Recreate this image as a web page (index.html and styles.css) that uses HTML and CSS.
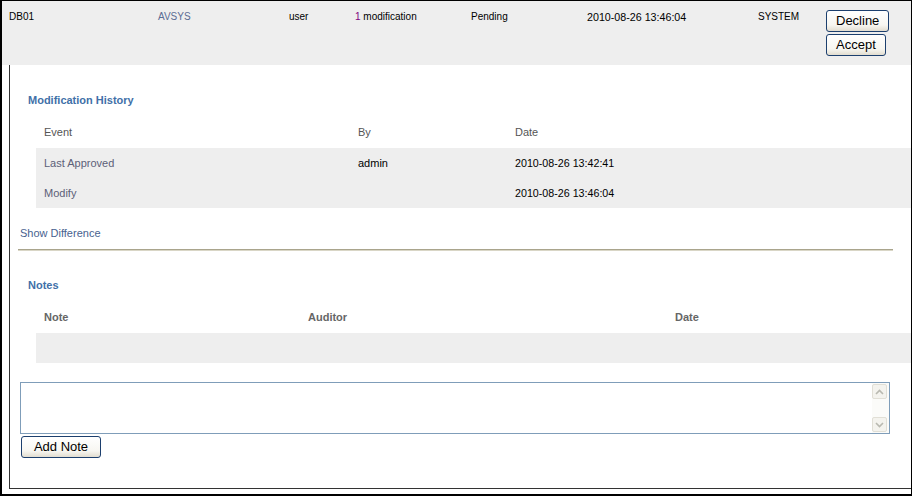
FILE: index.html
```html
<!DOCTYPE html>
<html lang="en">
<head>
    <meta charset="UTF-8">
    <title>Pending modification - DB01</title>
    <link rel="stylesheet" href="styles.css">
</head>
<body>
<div class="frame">
    <!--summary row-->
    <div class="summary">
        <span>DB01</span>
        <span class="sys">AVSYS</span>
        <span>user</span>
        <span><em class="count">1</em> modification</span>
        <span>Pending</span>
        <span class="dt">2010-08-26 13:46:04</span>
        <span>SYSTEM</span>
        <div class="actions">
            <button class="btn">Decline</button>
            <button class="btn">Accept</button>
        </div>
    </div>
    <!--detail-->
    <div class="detail">
        <h2 class="sec_title">Modification History</h2>
        <table class="grid history">
            <tr class="head"><th class="c1">Event</th><th class="c2">By</th><th>Date</th></tr>
            <tr><td class="evt">Last Approved</td><td>admin</td><td class="dt">2010-08-26 13:42:41</td></tr>
            <tr><td class="evt">Modify</td><td></td><td class="dt">2010-08-26 13:46:04</td></tr>
        </table>
        <a class="diff_link" href="javascript:void(0);">Show Difference</a>
        <hr class="rule">
        <h2 class="sec_title notes_title">Notes</h2>
        <table class="grid notes">
            <tr class="head bold"><th class="c1">Note</th><th class="c2">Auditor</th><th>Date</th></tr>
            <tr><td>&nbsp;</td><td></td><td></td></tr>
        </table>
        <div class="note_box">
            <textarea class="note_input"></textarea>
            <div class="vscroll">
                <span class="arrow"><svg width="9" height="6" viewBox="0 0 9 6"><path d="M1 5 L4.5 1.5 L8 5" fill="none" stroke="#b9b9b0" stroke-width="1.6"/></svg></span>
                <span class="arrow"><svg width="9" height="6" viewBox="0 0 9 6"><path d="M1 1 L4.5 4.5 L8 1" fill="none" stroke="#b9b9b0" stroke-width="1.6"/></svg></span>
            </div>
        </div>
        <button class="btn add_btn">Add Note</button>
    </div>
</div>
</body>
</html>
```

FILE: styles.css
```css
/*reset*/
html,body,div,h2,table,tr,th,td,hr,p{margin:0;padding:0;}
body{background:#fff;font:normal 11px "Liberation Sans",Arial,sans-serif;color:#000;}
table{border-collapse:collapse;border-spacing:0;}
em{font-style:normal;}

/*frame*/
.frame{width:912px;height:496px;box-sizing:border-box;border-style:solid;border-color:#000;border-width:1px 1px 2px 2px;display:flex;flex-direction:column;}

/*summary row*/
.summary{height:64px;box-sizing:border-box;background:#eee;padding:9px 0 0 7px;display:grid;grid-template-columns:149px 131px 66px 116px 116px 171px 68px auto;align-items:start;font-size:10px;line-height:12px;}
.summary span{padding-top:1px;}
.summary .sys{color:#5b6b93;}
.summary .count{color:#800080;}
.summary .dt{font-size:10.7px;}
.actions{display:flex;flex-direction:column;align-items:flex-start;gap:2px;}

.btn{font:13px "Liberation Sans",Arial,sans-serif;color:#000;height:22px;padding:0 9px;border:1px solid #1c3f6e;border-radius:3px;background:linear-gradient(to bottom,#fff 0%,#f7f6f1 70%,#e2ddd0 100%);cursor:pointer;line-height:18px;}

/*detail*/
.detail{flex:1;margin:0 0 5px 7px;border-left:1px solid #333;border-bottom:1px solid #333;display:flex;flex-direction:column;align-items:flex-start;}
.sec_title{font-size:11px;font-weight:bold;line-height:14px;color:#4170a8;margin:28px 0 0 18px;}
.notes_title{margin-top:27px;}

.grid{margin:11px 0 0 26px;width:calc(100% - 26px);font-size:11px;}
.grid th,.grid td{height:30px;padding:0 0 0 8px;text-align:left;vertical-align:middle;box-sizing:border-box;}
.grid .head th{font-weight:normal;color:#555;padding-bottom:3px;}
.grid .head.bold th{font-weight:bold;color:#666;}
.grid tr + tr td{background:#eee;}
.grid .evt{color:#5c6078;}
.grid .dt{font-size:10.7px;}
.history .c1{width:314px;}
.history .c2{width:157px;}
.notes .c1{width:264px;}
.notes .c2{width:367px;}

.diff_link{display:block;margin:18px 0 0 10px;line-height:14px;color:#48628f;text-decoration:none;}
.rule{align-self:stretch;margin:9px 18px 0 8px;height:0;border:0;border-top:1px solid #a9a48c;border-bottom:1px solid #d9d6c6;}

/*note input*/
.note_box{margin:19px 0 0 10px;width:870px;height:52px;box-sizing:border-box;border:1px solid #7f9db9;display:flex;background:#fff;}
.note_input{flex:1;border:0;resize:none;outline:none;font:11px "Liberation Sans",Arial,sans-serif;padding:2px;}
.vscroll{width:17px;display:flex;flex-direction:column;justify-content:space-between;background:#fbfbf9;padding:1px 0;}
.arrow{height:15px;width:15px;box-sizing:border-box;border:1px solid #e1dfd6;border-radius:2px;background:#f4f3ee;display:flex;align-items:center;justify-content:center;}

.add_btn{margin:2px 0 0 11px;width:80px;}
```
